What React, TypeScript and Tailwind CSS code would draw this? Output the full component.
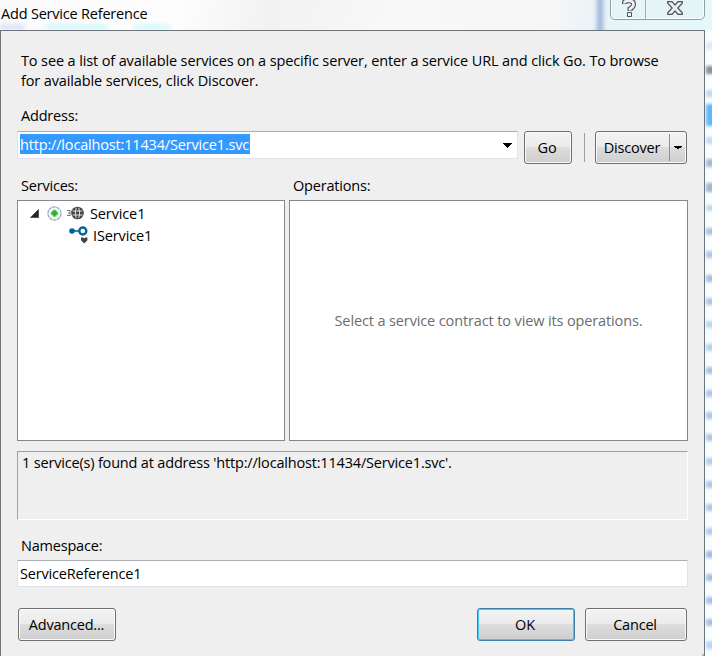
import * as React from "react"
import { clsx } from "clsx"

const ADDRESS = "http://localhost:11434/Service1.svc"

/** Blurred marks of the window behind, seen through the glass frame. */
const GLASS_MARKS = [
  { y: 46, height: 8, color: "#dcecfb" },
  { y: 70, height: 8, color: "#8391a0" },
  { y: 93, height: 7, color: "#c3d8f3" },
  { y: 115, height: 22, color: "#5fb8fb" },
  { y: 140, height: 7, color: "#c3dcfb" },
  { y: 163, height: 8, color: "#a4b9d8" },
  { y: 187, height: 9, color: "#a0b8d0" },
  { y: 208, height: 6, color: "#b7dcf4" },
  { y: 231, height: 7, color: "#aac3e8" },
  { y: 254, height: 7, color: "#adc6ee" },
  { y: 278, height: 7, color: "#a4bee4" },
  { y: 301, height: 7, color: "#aac5e9" },
  { y: 324, height: 7, color: "#b7d9f0" },
  { y: 347, height: 7, color: "#afd3ee" },
  { y: 370, height: 7, color: "#a7c4e8" },
  { y: 393, height: 7, color: "#adc6ed" },
  { y: 415, height: 7, color: "#adc8ed" },
  { y: 437, height: 7, color: "#a9c6ea" },
  { y: 461, height: 7, color: "#b0cff2" },
  { y: 484, height: 7, color: "#adc8ed" },
  { y: 507, height: 7, color: "#adc8ed" },
  { y: 531, height: 7, color: "#b0ccf2" },
  { y: 554, height: 7, color: "#a0bde6" },
  { y: 577, height: 7, color: "#a4c0e9" },
  { y: 600, height: 7, color: "#a4c0e9" },
  { y: 622, height: 7, color: "#a4c0e9" },
  { y: 645, height: 8, color: "#b9d6f6" },
]

function Label({ children, className }: { children: React.ReactNode; className?: string }) {
  return (
    <div className={clsx("h-5 whitespace-nowrap leading-5 tracking-[-0.2px]", className)}>{children}</div>
  )
}

type ButtonProps = {
  children: React.ReactNode
  className?: string
  isDefault?: boolean
}

function Button({ children, className, isDefault = false }: ButtonProps) {
  return (
    <button
      type="button"
      className={clsx(
        "flex h-[33px] shrink-0 items-center justify-center whitespace-nowrap rounded-[3px] border bg-[linear-gradient(#f3f3f3_0%,#ebebeb_48%,#dddddd_50%,#cecece_100%)] tracking-[-0.2px]",
        isDefault
          ? "border-[#3c7fb1] shadow-[inset_0_0_0_1px_#41c8f3]"
          : "border-[#707070] shadow-[inset_0_0_0_1px_#fafafa]",
        className
      )}
    >
      {children}
    </button>
  )
}

function Arrow({ className }: { className?: string }) {
  return (
    <svg viewBox="0 0 9 5" className={className} shapeRendering="crispEdges" aria-hidden>
      <path d="M0 0h9v1H8v1H7v1H6v1H5v1H4V4H3V3H2V2H1V1H0z" fill="#000" />
    </svg>
  )
}

function StatusIcon() {
  return (
    <svg viewBox="0 0 15 15" className="h-[15px] w-[15px]" aria-hidden>
      <circle cx="7.5" cy="7.5" r="6.6" fill="#f3f8fb" stroke="#7f9fb8" strokeWidth="1.1" strokeDasharray="3.4 .7" />
      <circle cx="7.5" cy="7.3" r="3.6" fill="#b4ecaa" />
      <path d="M7.5 3.8 11 7.3 7.500 10.800 4 7.300z" fill="#2db12a" stroke="#4cc648" strokeWidth=".8" strokeLinejoin="round" />
    </svg>
  )
}

function ServiceIcon() {
  return (
    <svg viewBox="0 0 18 14" className="h-[14px] w-[18px]" aria-hidden>
      <path d="M1 4.500h3M2 7h2M1 9.500h3M4 4v6" stroke="#777" strokeWidth="1" fill="none" />
      <circle cx="11.500" cy="7" r="6.300" fill="#424242" />
      <path d="M6.500 5h10M6.500 9h10" stroke="#e4e4e4" strokeWidth="1" fill="none" />
      <path d="M10.200 1.800q-1.800 5.200 0 10.400M12.800 1.800q1.800 5.200 0 10.400" stroke="#e4e4e4" strokeWidth="1" fill="none" />
    </svg>
  )
}

function ContractIcon() {
  return (
    <svg viewBox="0 0 20 18" className="h-[18px] w-5" aria-hidden>
      <path d="M3 5h8" stroke="#00639c" strokeWidth="1.600" />
      <circle cx="3" cy="5" r="2.800" fill="#00639c" />
      <circle cx="13.800" cy="5" r="3.500" fill="#fff" stroke="#00639c" strokeWidth="2.400" />
      <path d="M15.200 17.600 12 14.200v-2.700h2.200l1 .9 1-.9h2.200v2.700z" fill="#424242" />
    </svg>
  )
}

function TitleBar() {
  return (
    <header className="relative flex h-[30px] overflow-hidden bg-[linear-gradient(100deg,#fafafa_0%,#fdfdfd_25%,#f2f2f2_38%,#f8f8f8_55%,#f6f6f6_78%,#e7f3f7_84%,#e4f8fb_100%)]">
      <div className="absolute left-0 top-[25px] h-1 w-6 bg-[#d3daff] blur-[2px]" />
      <div className="absolute left-[46px] top-[25px] h-1 w-[62px] bg-[#c8f8fb] blur-[2px]" />
      <div className="absolute left-[134px] top-[25px] h-1 w-9 bg-[#c8f8fb] blur-[2px]" />
      <div className="absolute left-[597px] top-[-4px] h-10 w-[6px] bg-[#9db4dc] blur-[2px]" />
      <h1 className="relative ml-px mt-1 h-5 whitespace-nowrap leading-5 tracking-[-0.2px]">Add Service Reference</h1>
      <div className="absolute left-[610px] top-[-4px] flex h-6 w-[95px] rounded-b-[5px] border border-[#929da2] bg-[#e6f3f5]/70 shadow-[inset_0_0_0_1px_#f8ffff]">
        <div className="flex w-[35px] justify-center border-r border-[#a3adb1] pl-[2px] pt-[1px]">
          <svg viewBox="0 0 14 19" className="h-[19px] w-[14px]" aria-hidden>
            <path d="M2.500 6V4.500Q2.500 2.800 7 2.800t4.500 3.500Q11.500 9 8 11v2" fill="none" stroke="#4d525d" strokeWidth="5" />
            <path d="M2.500 5.500V4.500Q2.500 2.800 7 2.800t4.500 3.500Q11.500 9 8 11v1.500" fill="none" stroke="#f0f0f0" strokeWidth="2.700" />
            <path d="M5.500 14.500h4v4h-4z" fill="#f0f0f0" stroke="#4d525d" />
          </svg>
        </div>
        <div className="flex flex-1 justify-center pt-1">
          <svg viewBox="0 0 16 14" className="h-[14px] w-4" aria-hidden>
            <path d="M.7.700h4.300l3 3.300 3-3.300h4.300v1.500L10.800 7l4.500 4.800v1.500H11L8 10l-3 3.300H.7v-1.500L5.200 7 .7 2.200z" fill="#ededed" stroke="#4d525d" strokeWidth="1.200" />
          </svg>
        </div>
      </div>
    </header>
  )
}

export default function App() {
  return (
    <div className="relative h-[656px] w-[712px] overflow-hidden bg-[#f7feff] font-['Open_Sans','Noto_Sans',sans-serif] text-[14.5px] tracking-[-0.125px] text-black">
      <div className="absolute right-0 top-0 h-full w-[7px] overflow-hidden">
        {GLASS_MARKS.map((mark) => (
          <div
            key={mark.y}
            className="absolute left-[1px] w-[10px] blur-[1.5px]"
            style={{ top: mark.y - mark.height / 2, height: mark.height, backgroundColor: mark.color }}
          />
        ))}
      </div>
      <TitleBar />
      <main className="relative h-[640px] w-[705px] border border-[#6e747b] bg-[#efefef] pl-4 pr-4 pt-5">
        <p className="ml-1 whitespace-nowrap leading-5">
          To see a list of available services on a specific server, enter a service URL and click Go. To browse
          <br />
          for available services, click Discover.
        </p>

        <Label className="ml-1 mt-[15px]">Address:</Label>
        <div className="mt-[5px] flex h-[33px]">
          <div className="flex h-7 w-[501px] items-start justify-between border border-[#e2e3ea] border-t-[#abadb3] bg-white pl-[2px] pr-[5px] pt-[2px]">
            <span className="h-5 w-[230px] whitespace-nowrap bg-[#3399ff] leading-[21px] tracking-[-0.17px] text-white">
              {ADDRESS}
            </span>
            <Arrow className="mt-[9px] h-[5px] w-[9px]" />
          </div>
          <Button className="ml-[6px] w-12 pr-[2px]">Go</Button>
          <div className="ml-3 mt-[2px] h-[29px] w-px bg-[#a0a0a0]" />
          <Button className="ml-[10px] w-[92px]">
            <span className="w-[73px] pr-px text-center">Discover</span>
            <span className="flex h-[27px] flex-1 items-center justify-center border-l border-[#8e8f8f]">
              <Arrow className="h-1 w-2" />
            </span>
          </Button>
        </div>

        <div className="mt-3 flex gap-1">
          <section className="w-[268px]">
            <Label className="ml-1">Services:</Label>
            <div className="mt-1 h-[241px] border border-[#828790] bg-white pt-px">
              <div className="flex h-[22px] items-center pl-3">
                <svg viewBox="0 0 9 9" className="h-[9px] w-[9px]" aria-hidden>
                  <path d="M8.500.5v8H.5z" fill="#262626" stroke="#262626" strokeWidth=".6" />
                </svg>
                <span className="ml-2">
                  <StatusIcon />
                </span>
                <span className="ml-1">
                  <ServiceIcon />
                </span>
                <span className="ml-[6px] pt-[2px]">Service1</span>
              </div>
              <div className="flex h-[22px] items-center pl-[51px]">
                <ContractIcon />
                <span className="ml-1 pt-[2px]">IService1</span>
              </div>
            </div>
          </section>
          <section className="w-[399px]">
            <Label className="ml-1">Operations:</Label>
            <div className="mt-1 flex h-[241px] items-center justify-center border border-[#828790] bg-white text-[#6d6d6d]">
              <span className="whitespace-nowrap">Select a service contract to view its operations.</span>
            </div>
          </section>
        </div>

        <div className="mt-[10px] h-[69px] w-[671px] border border-white border-l-[#a0a0a0] border-t-[#a0a0a0] pl-1">
          <span className="block whitespace-nowrap leading-[22px] tracking-[-0.18px]">
            1 service(s) found at address '{ADDRESS}'.
          </span>
        </div>

        <Label className="ml-1 mt-4">Namespace:</Label>
        <div className="mt-1 h-[27px] w-[671px] border border-[#e2e3ea] border-t-[#abadb3] bg-white pl-[2px] pt-[3px]">
          <span className="block leading-5 tracking-[-0.19px]">ServiceReference1</span>
        </div>

        <footer className="mt-[21px] flex pl-px">
          <Button className="w-[98px] pr-px">Advanced...</Button>
          <Button isDefault className="ml-[361px] w-[98px] pr-[2px]">OK</Button>
          <Button className="ml-[10px] w-[102px] pr-[2px]">Cancel</Button>
        </footer>
        <div className="absolute left-[701px] top-[623px] h-[2px] w-[2px] bg-[#b0b0b0]" />
      </main>
    </div>
  )
}
